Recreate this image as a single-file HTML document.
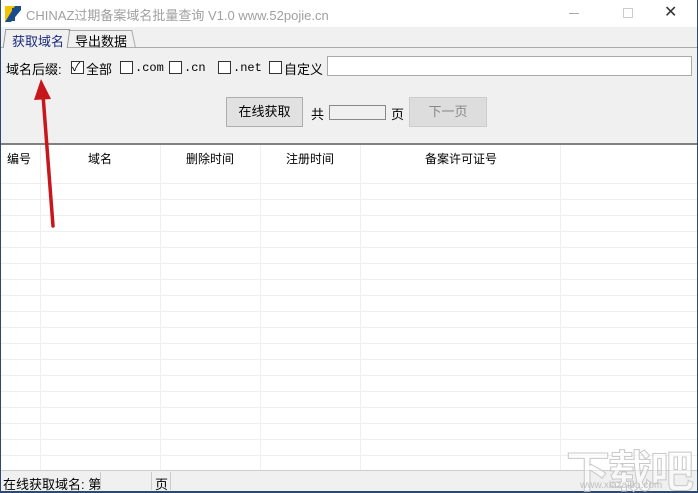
<!DOCTYPE html>
<html><head><meta charset="utf-8"><style>
*{margin:0;padding:0;box-sizing:border-box}
html,body{width:698px;height:493px;overflow:hidden}
body{background:#f0f0f0;font-family:"Liberation Sans","Noto Sans CJK SC",sans-serif;font-size:12px;color:#000;position:relative}
.abs{position:absolute}
.title{left:0;top:0;width:698px;height:27px;background:#fff;}
.tt{left:26px;top:5px;font-size:13px;color:#a0a0a0;white-space:nowrap}
.cb{width:13px;height:13px;border:1px solid #333;background:#fff}
.mono{font-family:"Liberation Mono",monospace;font-size:12px}
.grid{left:0;top:143px;width:697px;height:327px;background:#fff;border-top:2px solid #808080}
.hl{position:absolute;left:0;width:697px;height:1px;background:#efefef}
.vl{position:absolute;top:0;width:1px;height:327px;background:#efefef}
.hd{position:absolute;top:5px;font-size:12px}
</style></head><body>
<div class="abs title"></div>
<svg class="abs" style="left:5px;top:6px" width="16" height="16"><rect x="0" y="0" width="16" height="16" fill="#1a4c8c"/><polygon points="0,16 0,0 10,0" fill="#f2c400"/><polygon points="6,16 16,4 16,16" fill="#fff"/><rect x="7" y="2" width="3" height="13" fill="#1a4c8c"/></svg>
<div class="abs tt">CHINAZ过期备案域名批量查询 V1.0 www.52pojie.cn</div>
<div class="abs" style="left:569px;top:13px;width:10px;height:1px;background:#aaa"></div>
<div class="abs" style="left:623px;top:8px;width:10px;height:10px;border:1px solid #ccc"></div>
<div class="abs" style="left:664px;top:2px;font-size:16px;color:#333">✕</div>
<div class="abs" style="left:0;top:47px;width:698px;height:1px;background:#aaa"></div>
<div class="abs" style="left:4px;top:29px;width:65px;height:19px;border:1px solid #999;border-bottom:none;background:#f0f0f0;transform:skewX(-8deg)"></div>
<div class="abs" style="left:12px;top:31px;font-size:13px;color:#1a2a7a">获取域名</div>
<div class="abs" style="left:70px;top:30px;width:64px;height:17px;border:1px solid #aaa;border-bottom:none;border-left:none;transform:skewX(12deg)"></div>
<div class="abs" style="left:75px;top:31px;font-size:13px">导出数据</div>
<div class="abs" style="left:6px;top:59px;font-size:13px">域名后缀:</div>
<div class="abs cb" style="left:71px;top:61px"></div><div class="abs" style="left:72px;top:58px;font-size:12px">✓</div>
<div class="abs" style="left:86px;top:59px;font-size:13px">全部</div>
<div class="abs cb" style="left:120px;top:61px"></div><div class="abs mono" style="left:135px;top:61px">.com</div>
<div class="abs cb" style="left:169px;top:61px"></div><div class="abs mono" style="left:184px;top:61px">.cn</div>
<div class="abs cb" style="left:218px;top:61px"></div><div class="abs mono" style="left:233px;top:61px">.net</div>
<div class="abs cb" style="left:269px;top:61px"></div><div class="abs" style="left:284px;top:59px;font-size:13px">自定义</div>
<div class="abs" style="left:327px;top:56px;width:365px;height:20px;border:1px solid #aaa;background:#fff"></div>
<div class="abs" style="left:226px;top:97px;width:77px;height:30px;border:1px solid #adadad;background:#e1e1e1;text-align:center;line-height:28px;font-size:13px">在线获取</div>
<div class="abs" style="left:311px;top:104px;font-size:13px">共</div>
<div class="abs" style="left:329px;top:105px;width:57px;height:15px;border:1px solid #888;background:#f0f0f0"></div>
<div class="abs" style="left:391px;top:104px;font-size:13px">页</div>
<div class="abs" style="left:409px;top:97px;width:78px;height:30px;border:1px solid #ccc;background:#ddd;text-align:center;line-height:28px;font-size:13px;color:#888">下一页</div>
<div class="abs grid">
<div class="vl" style="left:40px;top:0"></div><div class="vl" style="left:160px"></div><div class="vl" style="left:260px"></div><div class="vl" style="left:360px"></div><div class="vl" style="left:560px"></div>
<div class="hd" style="left:7px">编号</div><div class="hd" style="left:88px">域名</div><div class="hd" style="left:186px">删除时间</div><div class="hd" style="left:286px">注册时间</div><div class="hd" style="left:425px">备案许可证号</div>
<div class="hl" style="top:38px"></div><div class="hl" style="top:54px"></div><div class="hl" style="top:70px"></div><div class="hl" style="top:86px"></div><div class="hl" style="top:102px"></div><div class="hl" style="top:118px"></div><div class="hl" style="top:134px"></div><div class="hl" style="top:150px"></div><div class="hl" style="top:166px"></div><div class="hl" style="top:182px"></div><div class="hl" style="top:198px"></div><div class="hl" style="top:214px"></div><div class="hl" style="top:230px"></div><div class="hl" style="top:246px"></div><div class="hl" style="top:262px"></div><div class="hl" style="top:278px"></div><div class="hl" style="top:294px"></div><div class="hl" style="top:310px"></div>
</div>
<div class="abs" style="left:0;top:470px;width:698px;height:1px;background:#ccc"></div>
<div class="abs" style="left:3px;top:474px;font-size:13px">在线获取域名: 第</div>
<div class="abs" style="left:100px;top:472px;width:1px;height:18px;background:#ccc"></div>
<div class="abs" style="left:151px;top:472px;width:1px;height:18px;background:#ccc"></div>
<div class="abs" style="left:155px;top:474px;font-size:13px">页</div>
<div class="abs" style="left:170px;top:472px;width:1px;height:18px;background:#ccc"></div>
<div class="abs" style="left:0;top:491px;width:698px;height:2px;background:#2b4a6e"></div>
<div class="abs" style="left:697px;top:0;width:1px;height:493px;background:#2b4a6e"></div>
<div class="abs" style="left:0;top:0;width:1px;height:493px;background:#2b4a6e"></div>
<div class="abs" style="left:566px;top:436px;font-size:44px;color:rgba(255,255,255,.5);-webkit-text-stroke:1px #c8c8c8;font-weight:bold;letter-spacing:-2px">下载吧</div>
<div class="abs" style="left:580px;top:480px;font-size:10px;color:#c0c0c0">www.xiazaiba.com</div>
<svg class="abs" style="left:0;top:0" width="698" height="493"><line x1="53" y1="226" x2="43" y2="95" stroke="#c8171c" stroke-width="3.5" stroke-linecap="round"/><polygon points="41,79 34,100 51,99" fill="#c8171c"/></svg>
</body></html>
